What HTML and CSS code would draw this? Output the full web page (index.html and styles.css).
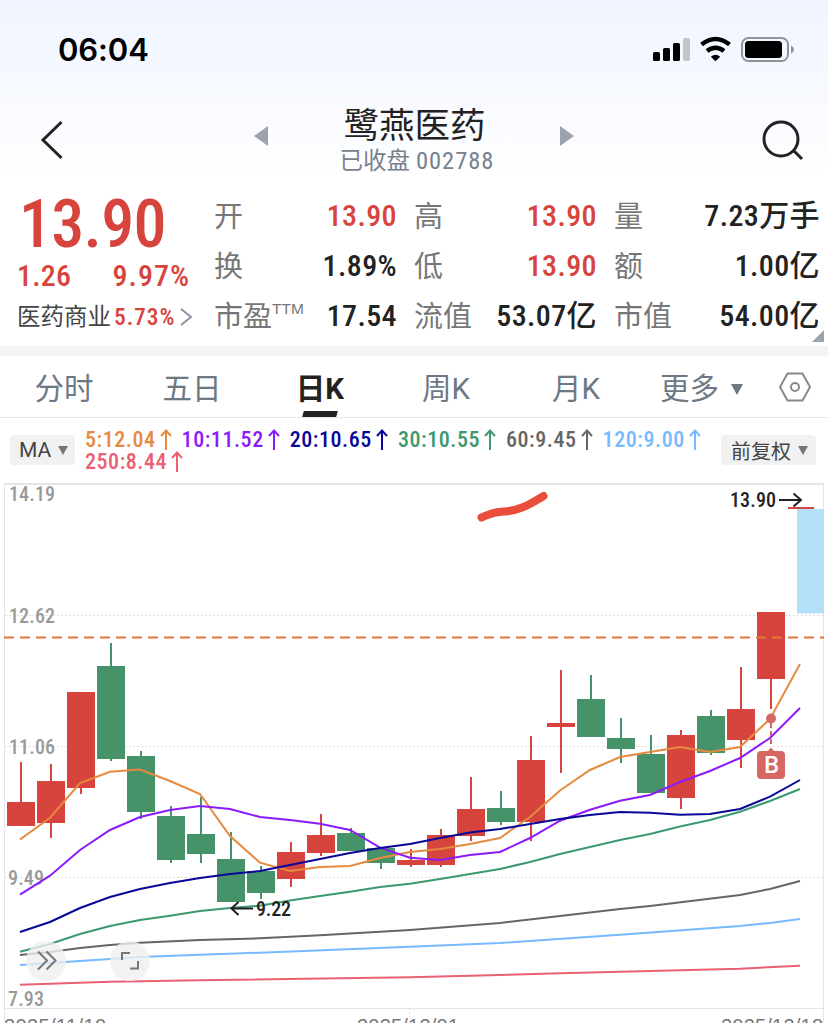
FILE: index.html
```html
<!DOCTYPE html>
<html lang="zh-CN">
<head>
    <meta charset="UTF-8">
    <title>鹭燕医药 002788</title>
    <link rel="stylesheet" href="styles.css">
</head>
<body>
<header>
    <div class="status">
        <span class="time">06:04</span>
        <svg class="signs" width="144" height="28" viewBox="652 36 144 28">
            <rect x="653" y="52" width="7" height="9" rx="1.5"/>
            <rect x="663" y="48" width="7" height="13" rx="1.5"/>
            <rect x="673" y="43" width="7" height="18" rx="1.5"/>
            <rect x="683" y="38" width="7" height="23" rx="1.5" fill="#c3c5cb"/>
            <path d="M701.500 44.500Q715.500 33.500 729.500 44.500M707 51Q715.500 44.500 724 51" fill="none" stroke="#000" stroke-width="4.400"/>
            <path d="M710.800 56.700Q715.500 53 720.200 56.700L715.500 61.200Z"/>
            <rect x="742" y="38" width="46" height="23" rx="6.500" fill="none" stroke="#919398" stroke-width="2"/>
            <rect x="745" y="41" width="37" height="17" rx="3.500"/>
            <path d="M791 45.500Q794 47 794 49.500T791 53.500Z" fill="#919398"/>
        </svg>
    </div>
    <div class="nav">
        <svg class="back" width="24" height="40" viewBox="0 0 24 40"><path d="M21.500 2L3 20L21.500 38"/></svg>
        <svg class="prev" width="14" height="20" viewBox="0 0 14 20"><path d="M14 0V20L0 10Z"/></svg>
        <div class="title">
            <h1>鹭燕医药</h1>
            <p>已收盘 <span>002788</span></p>
        </div>
        <svg class="next" width="14" height="20" viewBox="0 0 14 20"><path d="M0 0V20L14 10Z"/></svg>
        <svg class="search" width="42" height="42" viewBox="0 0 42 42"><circle cx="19" cy="20" r="17"/><path d="M31 31L40 40"/></svg>
    </div>
</header>

<section class="quote">
    <div class="price">
        <div class="now">13.90</div>
        <div class="change"><span>1.26</span><span>9.97%</span></div>
        <div class="trade">
            <span>医药商业</span><b>5.73%</b>
            <svg width="12" height="18" viewBox="0 0 12 18"><path d="M1 1L11 9L1 17"/></svg>
        </div>
    </div>
    <dl class="col1">
        <div><dt>开</dt><dd class="red">13.90</dd></div>
        <div><dt>换</dt><dd>1.89%</dd></div>
        <div><dt>市盈<sup>TTM</sup></dt><dd>17.54</dd></div>
    </dl>
    <dl class="col2">
        <div><dt>高</dt><dd class="red">13.90</dd></div>
        <div><dt>低</dt><dd class="red">13.90</dd></div>
        <div><dt>流值</dt><dd>53.07亿</dd></div>
    </dl>
    <dl class="col3">
        <div><dt>量</dt><dd>7.23万手</dd></div>
        <div><dt>额</dt><dd>1.00亿</dd></div>
        <div><dt>市值</dt><dd>54.00亿</dd></div>
    </dl>
    <i class="corner"></i>
</section>

<nav class="tabs">
    <span>分时</span>
    <span>五日</span>
    <span class="current">日K</span>
    <span>周K</span>
    <span>月K</span>
    <span class="more">更多<i class="down"></i></span>
    <svg class="setting" width="32" height="30" viewBox="0 0 32 30"><path d="M8.500 1.500H23.500L31 15L23.500 28.500H8.500L1 15Z"/><circle cx="16" cy="15" r="4"/></svg>
</nav>

<div class="ma">
    <div class="btn ma-btn">MA<i class="down"></i></div>
    <ul>
        <li class="ma5">5:12.04<svg class="up" viewBox="0 0 12 21"><path d="M6 21V1.500M1 7L6 1.500L11 7"/></svg></li>
        <li class="ma10">10:11.52<svg class="up" viewBox="0 0 12 21"><path d="M6 21V1.500M1 7L6 1.500L11 7"/></svg></li>
        <li class="ma20">20:10.65<svg class="up" viewBox="0 0 12 21"><path d="M6 21V1.500M1 7L6 1.500L11 7"/></svg></li>
        <li class="ma30">30:10.55<svg class="up" viewBox="0 0 12 21"><path d="M6 21V1.500M1 7L6 1.500L11 7"/></svg></li>
        <li class="ma60">60:9.45<svg class="up" viewBox="0 0 12 21"><path d="M6 21V1.500M1 7L6 1.500L11 7"/></svg></li>
        <li class="ma120">120:9.00<svg class="up" viewBox="0 0 12 21"><path d="M6 21V1.500M1 7L6 1.500L11 7"/></svg></li>
        <li class="ma250">250:8.44<svg class="up" viewBox="0 0 12 21"><path d="M6 21V1.500M1 7L6 1.500L11 7"/></svg></li>
    </ul>
    <div class="btn right-btn">前复权<i class="down"></i></div>
</div>

<svg class="chart" width="828" height="545" viewBox="0 478 828 545">
    <!-- grid -->
    <path class="frame" d="M4.500 484V1023M823.500 484V1023M4 1008.500H824"/>
    <path class="frame top" d="M4 484H824"/>
    <path class="grid" d="M5 615.500H823M5 746.500H823M5 877.500H823M409.500 1008V1014"/>
    <g class="axis">
        <text x="9" y="501" textLength="46">14.19</text>
        <text x="9" y="623" textLength="46">12.62</text>
        <text x="9" y="754" textLength="46">11.06</text>
        <text x="8" y="885" textLength="36">9.49</text>
        <text x="8" y="1006" textLength="36">7.93</text>
    </g>
    <g class="date">
        <text x="4" y="1033" textLength="102">2025/11/10</text>
        <text x="357" y="1033" textLength="102">2025/12/01</text>
        <text x="721" y="1033" textLength="102">2025/12/18</text>
    </g>

    <!-- candles -->
    <rect x="797" y="509" width="27" height="104.500" fill="#b4dff8"/>
    <path class="up-k" d="M7 802h28v24h-28zM37 781h28v42h-28zM67 692h28v96h-28zM277 852h28v27h-28zM307 835h28v18h-28zM397 860h28v5h-28zM427 835h28v30h-28zM457 809h28v27h-28zM517 760h28v62h-28zM547 723h28v4h-28zM667 735h28v63h-28zM727 709h28v31h-28zM757 612h28v67h-28zM788 507h26v2h-26z"/>
    <path class="up-k" d="M20 762h2v40h-2zM50 764h2v74h-2zM80 788h2v6h-2zM290 842h2v45h-2zM320 814h2v42h-2zM410 849h2v18h-2zM440 829h2v38h-2zM470 777h2v64h-2zM530 736h2v105h-2zM560 670h2v103h-2zM680 730h2v79h-2zM740 667h2v101h-2zM770 679h2v30h-2z"/>
    <path class="down-k" d="M97 666h28v93h-28zM127 756h28v56h-28zM157 816h28v44h-28zM187 834h28v20h-28zM217 859h28v43h-28zM247 871h28v22h-28zM337 833h28v18h-28zM367 848h28v15h-28zM487 808h28v14h-28zM577 699h28v38h-28zM607 738h28v11h-28zM637 754h28v39h-28zM697 716h28v37h-28z"/>
    <path class="down-k" d="M110 643h2v118h-2zM140 751h2v68h-2zM170 806h2v57h-2zM200 797h2v66h-2zM230 832h2v27h-2zM260 866h2v33h-2zM350 828h2v5h-2zM380 863h2v6h-2zM500 791h2v34h-2zM590 675h2v24h-2zM620 718h2v45h-2zM650 735h2v19h-2zM710 710h2v45h-2z"/>

    <!-- cost line -->
    <path class="cost" d="M4 637.500H824"/>

    <!-- ma lines -->
    <polyline class="line ma250" points="20,984.700 110,981.700 200,980.300 410,977.300 560,973.300 740,968.700 800,965.700"/>
    <polyline class="line ma120" points="20,965 50,963 80,961 140,957 200,954.700 260,952.700 410,946.700 500,943 620,934.700 740,926 770,923 800,919"/>
    <polyline class="line ma60" points="20,955 50,952 80,948 110,945 140,942.700 200,940 260,938.300 320,935.300 410,930 500,923 560,916 620,909 650,906 740,895 770,889 800,881"/>
    <polyline class="line ma30" points="20,951.700 50,944 80,934 110,926 140,920 170,915.700 200,911 230,908 260,905.700 290,900.500 320,896 350,891.700 380,887 410,883.700 440,879 470,874 500,869 530,862 560,854 590,847 620,840 650,834 680,826.500 710,820 740,811.700 770,801 800,789"/>
    <polyline class="line ma5" points="20,839.500 50,817.700 80,783 110,771.700 140,769.500 170,781 200,794 230,836 260,862.700 290,871 320,867 350,866 380,858 410,852 440,849 470,844 500,838 530,817 560,790.500 590,770 620,757 650,752 680,747 710,752 740,747 770,719 800,664"/>
    <polyline class="line ma10" points="20,894.700 50,875.700 80,850 110,830 140,817 170,810 200,806 230,809 260,817 290,820 320,823.700 350,830 380,847.700 410,857.700 440,860 470,855 500,852 530,838 560,820.700 590,809.700 620,800.700 650,795 680,782 710,771 740,758 770,738 800,708"/>
    <polyline class="line ma20" points="20,932 50,922 80,908 110,897 140,889 170,883 200,878 230,874 260,871 290,865 320,859 350,853 380,848 410,844 440,838 470,832.500 500,829 530,824 560,819 590,815 620,812 650,812.700 680,814.700 710,814 740,809 770,796.700 800,780"/>

    <!-- high and low -->
    <g class="mark">
        <text x="730" y="507" textLength="46">13.90</text>
        <path d="M779 500H801M793.500 493.500L801 500L793.500 506.500"/>
        <text x="256" y="916" textLength="35">9.22</text>
        <path d="M232 908.500H253M238.500 902L231.500 908.500L238.500 915"/>
    </g>

    <!-- buy point -->
    <g class="buy">
        <path d="M771 723V747" stroke="#dc6464" stroke-width="2" stroke-dasharray="5 3"/>
        <circle cx="771" cy="718.500" r="5"/>
        <path d="M768 751L771 747.500L774 751H781Q785 751 785 755V775Q785 779 781 779H761Q757 779 757 775V755Q757 751 761 751Z"/>
        <text x="771.500" y="773">B</text>
    </g>

    <path class="pen" d="M481.500 517.500C490 514 493 512 503 511.500C520 511 530 504 543.500 496"/>

    <g class="tool">
        <circle cx="46" cy="961" r="20"/>
        <path d="M38 951.500L47 960.500L38 969.500M46.500 951.500L55.500 960.500L46.500 969.500"/>
        <circle cx="130" cy="961" r="20"/>
        <path d="M122 960V953H130M138 961V968.500H130"/>
    </g>
</svg>
</body>
</html>
```
FILE: styles.css
```css
* {
    margin: 0;
    padding: 0;
    list-style: none;
    box-sizing: border-box;
}

body {
    width: 828px;
    height: 1023px;
    overflow: hidden;
    background-color: #fff;
    font-family: Roboto, "Noto Sans CJK SC", sans-serif;
    color: #222;
}

svg {
    display: block;
    flex: none;
}

i {
    display: block;
}

header {
    height: 190px;
    background: linear-gradient(#f0f5ff, #f5f8ff 38%, #fff 92%);
}

.status {
    height: 100px;
    padding: 0 32px 0 58px;
    display: flex;
    justify-content: space-between;
    align-items: center;
}

.time {
    font: 600 31px/40px Inter, sans-serif;
    letter-spacing: -.1px;
    color: #000;
}

.nav {
    height: 90px;
    display: grid;
    grid-template-columns: 40px 213px 64px 200px 42px 202px 67px;
}

.nav svg, .tabs svg, .trade svg {
    fill: none;
    stroke: #222;
    stroke-width: 3;
}

.nav .back {
    grid-column: 2;
    margin-top: 20px;
}

.nav .prev, .nav .next {
    grid-column: 3;
    margin: 26px 0 0 1px;
    fill: #9ba3ad;
    stroke: none;
}

.nav .next {
    grid-column: 5;
    margin-left: 43px;
}

.title {
    grid-column: 4;
    text-align: center;
}

.title h1 {
    margin: 5px 5px 0 0;
    font-size: 35.5px;
    line-height: 42px;
    font-weight: 400;
    white-space: nowrap;
}

.title p {
    font-size: 23.5px;
    line-height: 28px;
    color: #77818d;
    white-space: nowrap;
}

.title span {
    font-size: 24.5px;
    font-stretch: 75%;
    letter-spacing: 1px;
}

.nav .search {
    grid-column: 7;
    margin: 19px 0 0 1px;
}

.quote {
    position: relative;
    height: 156px;
    padding: 1px 8px 0 17px;
    display: grid;
    grid-template-columns: 198px 182px 18px 182px 18px 205px;
}

.price {
    color: #d6443d;
    font-stretch: 75%;
}

.now {
    height: 66px;
    margin-left: 2px;
    font-size: 66px;
    line-height: 68px;
    font-weight: 500;
    letter-spacing: -.7px;
}

.change {
    width: 173px;
    height: 40px;
    display: flex;
    justify-content: space-between;
    font-size: 30px;
    line-height: 38px;
    font-weight: 500;
    letter-spacing: .2px;
}

.change span:last-child {
    letter-spacing: 1px;
}

.trade {
    display: flex;
    align-items: center;
    font-size: 23.5px;
    line-height: 39px;
    white-space: nowrap;
}

.trade span {
    color: #444;
}

.trade b {
    padding-top: 1px;
    margin: 0 5px 0 3px;
    font-weight: 500;
    letter-spacing: .9px;
}

.trade svg {
    stroke: #8b95a0;
    stroke-width: 2;
}

.col2 {
    grid-column: 4;
}

.col3 {
    grid-column: 6;
}

dl div {
    height: 50px;
    display: flex;
    justify-content: space-between;
    white-space: nowrap;
}

dt {
    margin-left: -1px;
    font-size: 29px;
    line-height: 52px;
    font-weight: 400;
    color: #777;
}

dt sup {
    font: 15.5px/0 "Liberation Sans", sans-serif;
    vertical-align: 13px;
}

dd {
    font-size: 30px;
    line-height: 49px;
    font-weight: 500;
    font-stretch: 75%;
    letter-spacing: .4px;
}

.red {
    color: #d6443d;
}

.corner {
    position: absolute;
    right: 4px;
    bottom: 4px;
    border: 6px solid transparent;
    border-right-color: #9ba3ad;
    border-bottom-color: #9ba3ad;
}

.tabs {
    height: 72px;
    border-top: 10px solid #f3f3f3;
    border-bottom: 1px solid #e9e9e9;
    display: grid;
    grid-template-columns: 128px 128px 128px 124px 136px 135px 49px;
    font-size: 29.5px;
    line-height: 66px;
    text-align: center;
    color: #6d7885;
}

.tabs span {
    height: 61px;
}

.current {
    position: relative;
    font-weight: 700;
    color: #222;
}

.current::after {
    content: "";
    position: absolute;
    left: 47px;
    bottom: 0;
    width: 34px;
    height: 6px;
    background-color: #222;
    transform: skewX(-15deg);
}

.down {
    border: 6px solid transparent;
    border-top: 11px solid #757575;
    border-bottom: 0;
}

.tabs .more {
    display: flex;
    align-items: flex-start;
    padding-left: 16px;
}

.more .down {
    margin: 28px 0 0 12px;
    border-top-color: #6d7885;
}

.tabs .setting {
    margin-top: 16px;
    stroke: #888;
    stroke-width: 2;
}

.ma {
    height: 60px;
    display: flex;
    padding: 0 12px 0 10px;
}

.btn {
    height: 30px;
    margin-top: 17px;
    display: flex;
    align-items: center;
    justify-content: center;
    gap: 7px;
    border-radius: 4px;
    background-color: #f1f1f1;
    font-size: 20px;
    color: #444;
    white-space: nowrap;
}

.ma-btn {
    width: 65px;
    padding-left: 2px;
    font-size: 21px;
}

.right-btn {
    width: 95px;
    padding-left: 2px;
}

.btn .down {
    border-width: 9px 5px 0;
}

.ma ul {
    width: 646px;
    padding: 11px 0 0 10px;
    display: flex;
    flex-wrap: wrap;
    align-content: flex-start;
    font-size: 22px;
    line-height: 22px;
    font-weight: 500;
    font-stretch: 75%;
    letter-spacing: .55px;
}

.ma li {
    display: flex;
    margin-right: 10px;
}

.up {
    width: 12px;
    height: 21px;
    margin-left: 4px;
    fill: none;
    stroke: currentColor;
    stroke-width: 2;
}

.ma5 { color: #e58a3f; }
.ma10 { color: #8b1bfb; }
.ma20 { color: #070798; }
.ma30 { color: #3c996f; }
.ma60 { color: #666; }
.ma120 { color: #77baff; }
.ma250 { color: #ea6072; }

.line {
    fill: none;
    stroke: currentColor;
    stroke-width: 2;
}

.frame {
    fill: none;
    stroke: #e5e5e5;
}

.top {
    stroke-width: 2;
}

.grid {
    fill: none;
    stroke: #ddd;
    stroke-dasharray: 2 2;
}

.axis {
    font-size: 20px;
    font-weight: 500;
    fill: #999;
    font-stretch: 75%;
}

.date {
    font-family: "Liberation Sans", sans-serif;
    font-size: 20px;
    fill: #777;
}

.up-k {
    fill: #d6443d;
}

.down-k {
    fill: #469369;
}

.cost {
    stroke: #e17a35;
    stroke-width: 2;
    stroke-dasharray: 10 6;
}

.mark {
    font-size: 20px;
    font-weight: 500;
    font-stretch: 75%;
    fill: #222;
}

.mark path {
    fill: none;
    stroke: #222;
    stroke-width: 2;
}

.buy {
    fill: #d76762;
}

.buy text {
    fill: #fff;
    font-size: 24px;
    font-weight: 500;
    text-anchor: middle;
}

.pen {
    fill: none;
    stroke: #eb4d3d;
    stroke-width: 8;
    stroke-linecap: round;
}

.tool circle {
    fill: #efefef;
    fill-opacity: .8;
}

.tool path {
    fill: none;
    stroke: #777;
    stroke-width: 2;
}
```
